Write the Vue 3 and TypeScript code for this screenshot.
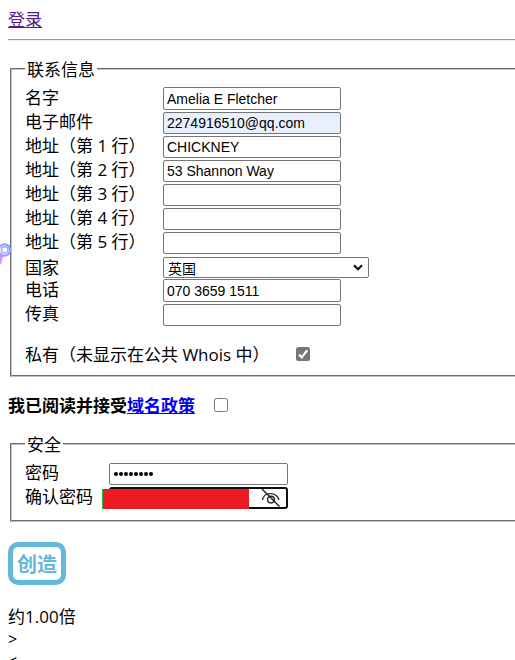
<script setup lang="ts">
import { ref } from 'vue'

interface Field {
  label: string
  kind: 'text' | 'select'
  value: string
  filled?: boolean
  tall?: boolean
}

const contact = ref<Field[]>([
  { label: '名字', kind: 'text', value: 'Amelia E Fletcher', tall: true },
  { label: '电子邮件', kind: 'text', value: '2274916510@qq.com', filled: true },
  { label: '地址（第 1 行）', kind: 'text', value: 'CHICKNEY' },
  { label: '地址（第 2 行）', kind: 'text', value: '53 Shannon Way' },
  { label: '地址（第 3 行）', kind: 'text', value: '' },
  { label: '地址（第 4 行）', kind: 'text', value: '' },
  { label: '地址（第 5 行）', kind: 'text', value: '' },
  { label: '国家', kind: 'select', value: '英国' },
  { label: '电话', kind: 'text', value: '070 3659 1511', tall: true },
  { label: '传真', kind: 'text', value: '' },
])
const isPrivate = ref(true)
const accepted = ref(false)
</script>

<template>
  <main class="page">
    <svg class="floater" viewBox="0 0 14 26" width="14" height="26">
      <defs>
        <linearGradient id="lens" x1="1" y1="0" x2="0" y2="1">
          <stop offset="0" stop-color="#6f9dff" />
          <stop offset="1" stop-color="#c58af8" />
        </linearGradient>
      </defs>
      <path d="M1.5 13 L-1 22" stroke="#c79dfa" stroke-width="4" />
      <circle cx="4.5" cy="8" r="5.8" fill="#e4e2ff" stroke="url(#lens)" stroke-width="2" />
      <circle cx="4.8" cy="7.8" r="3.2" fill="#fff" stroke="#8f9cff" stroke-width="1.2" />
    </svg>

    <nav class="top"><a class="login" href="#">登录</a></nav>
    <div class="rule"></div>

    <fieldset class="contact">
      <legend>联系信息</legend>
      <div v-for="f in contact" :key="f.label" class="row" :class="[f.kind, { tall: f.tall }]">
        <label>{{ f.label }}</label>
        <span v-if="f.kind === 'select'" class="box select-box">
          <span>{{ f.value }}</span>
          <svg width="10" height="7" viewBox="0 0 10 7">
            <path d="M1 1.2 L5 5.2 L9 1.2" fill="none" stroke="#111" stroke-width="2.2" />
          </svg>
        </span>
        <input v-else v-model="f.value" class="box" :class="{ filled: f.filled }" type="text" />
      </div>
      <div class="private">
        <label>私有（未显示在公共 Whois 中）</label>
        <span class="check on" @click="isPrivate = !isPrivate">
          <svg v-if="isPrivate" width="14" height="14" viewBox="0 0 13 13">
            <path d="M2.8 7 L5.3 9.6 L10.4 3" fill="none" stroke="#fff" stroke-width="2" />
          </svg>
        </span>
      </div>
    </fieldset>

    <div class="policy">
      <b>我已阅读并接受<a href="#">域名政策</a></b>
      <span class="check" @click="accepted = !accepted"></span>
    </div>

    <fieldset class="security">
      <legend>安全</legend>
      <div class="row">
        <label>密码</label>
        <span class="box dots"><i v-for="n in 8" :key="n"></i></span>
      </div>
      <div class="row">
        <label>确认密码</label>
        <span class="box focused">
          <span class="mask"></span>
          <svg class="eye" width="20" height="20" viewBox="0 0 20 20">
            <g fill="none" stroke="#222" stroke-width="1.35">
              <path d="M1.5 12 C2.5 3.5 15.5 3.5 18 12" />
              <circle cx="10" cy="11.6" r="3.4" />
              <path d="M1 1 L18.5 18.5" />
            </g>
          </svg>
        </span>
      </div>
    </fieldset>

    <button class="create" type="button">创造</button>

    <div class="tail">约1.00倍</div>
    <div class="tail arrow">&gt;</div>
    <div class="tail arrow">&lt;</div>
  </main>
</template>

<style>
html,
body {
  margin: 0;
  overflow: hidden;
  background: #fff;
}
</style>

<style scoped>
.page {
  position: relative;
  box-sizing: border-box;
  width: 540px;
  height: 660px;
  overflow: hidden;
  padding-left: 8px;
  font-family: 'Open Sans', 'Noto Sans CJK SC', sans-serif;
  font-size: 17px;
  line-height: 22px;
  color: #000;
}
.floater {
  position: absolute;
  left: 0;
  top: 242px;
}
.top {
  height: 30px;
  padding-top: 9px;
}
.login {
  color: #551a8b;
}
.rule {
  height: 1px;
  background: #999;
  border-bottom: 1px solid #eee;
}
fieldset {
  box-sizing: border-box;
  width: 540px;
  margin: 0 0 0 2px;
  padding: 7px 0 0 13px;
  border: 2px groove #c0c0c0;
}
.contact {
  height: 319px;
  margin-top: 17px;
}
legend {
  box-sizing: border-box;
  height: 22px;
  padding: 1px 2px 0;
}
.row {
  display: flex;
  align-items: flex-start;
  height: 24px;
}
.row.tall {
  height: 25px;
}
.row.select {
  height: 23px;
  padding-top: 1px;
  box-sizing: border-box;
}
.row label {
  width: 138px;
  white-space: nowrap;
}
.row.text:not(.tall) label {
  margin-top: -1px;
}
.box {
  box-sizing: border-box;
  width: 178px;
  height: 22px;
  padding: 1px 3px;
  border: 1px solid #767676;
  border-radius: 2px;
  background: #fff;
  font: 14px 'Liberation Sans', 'Noto Sans CJK SC', sans-serif;
  color: #000;
  outline: none;
}
.tall .box {
  height: 23px;
}
.filled {
  background: #e8f0fe;
}
.select-box {
  display: flex;
  align-items: center;
  justify-content: space-between;
  width: 206px;
  height: 21px;
  padding: 0 5px 0 4px;
}
.private {
  display: flex;
  align-items: center;
  height: 22px;
  margin-top: 16px;
}
.private label {
  width: 271px;
  white-space: nowrap;
}
.check {
  box-sizing: border-box;
  width: 14px;
  height: 14px;
  margin-bottom: 2px;
  border: 1px solid #767676;
  border-radius: 2.5px;
}
.check.on {
  display: flex;
  border: 0;
  background: #767676;
}
.policy {
  display: flex;
  align-items: center;
  height: 22px;
  margin-top: 18px;
}
.policy b {
  width: 206px;
  white-space: nowrap;
}
.policy a {
  color: #0000ee;
}
.security {
  height: 89px;
  margin-top: 16px;
  padding-top: 8px;
}
.security .row label {
  width: 84px;
  margin-top: -1px;
}
.security .box {
  width: 179px;
}
.dots {
  display: flex;
  align-items: center;
  gap: 1px;
  padding-left: 4px;
}
.dots i {
  width: 4px;
  height: 4px;
  border-radius: 50%;
  background: #000;
}
.security .focused {
  position: relative;
  display: flex;
  justify-content: flex-end;
  padding: 0 5px 0 0;
  border: 2px solid #101010;
  border-radius: 3px;
}
.mask {
  position: absolute;
  left: -9px;
  top: 0;
  width: 146px;
  height: 20px;
  border-left: 1px solid #22c04a;
  background: #ed1c24;
}
.eye {
  margin-top: -1px;
}
.create {
  display: block;
  box-sizing: border-box;
  width: 58px;
  height: 43px;
  margin: 20px 0 21px;
  padding: 0;
  border: 5px solid #65b8da;
  border-radius: 10px;
  background: #fff;
  color: #65b8da;
  font: bold 20px/30px 'Noto Sans CJK SC', sans-serif;
}
.tail.arrow {
  font-size: 16px;
}
</style>
